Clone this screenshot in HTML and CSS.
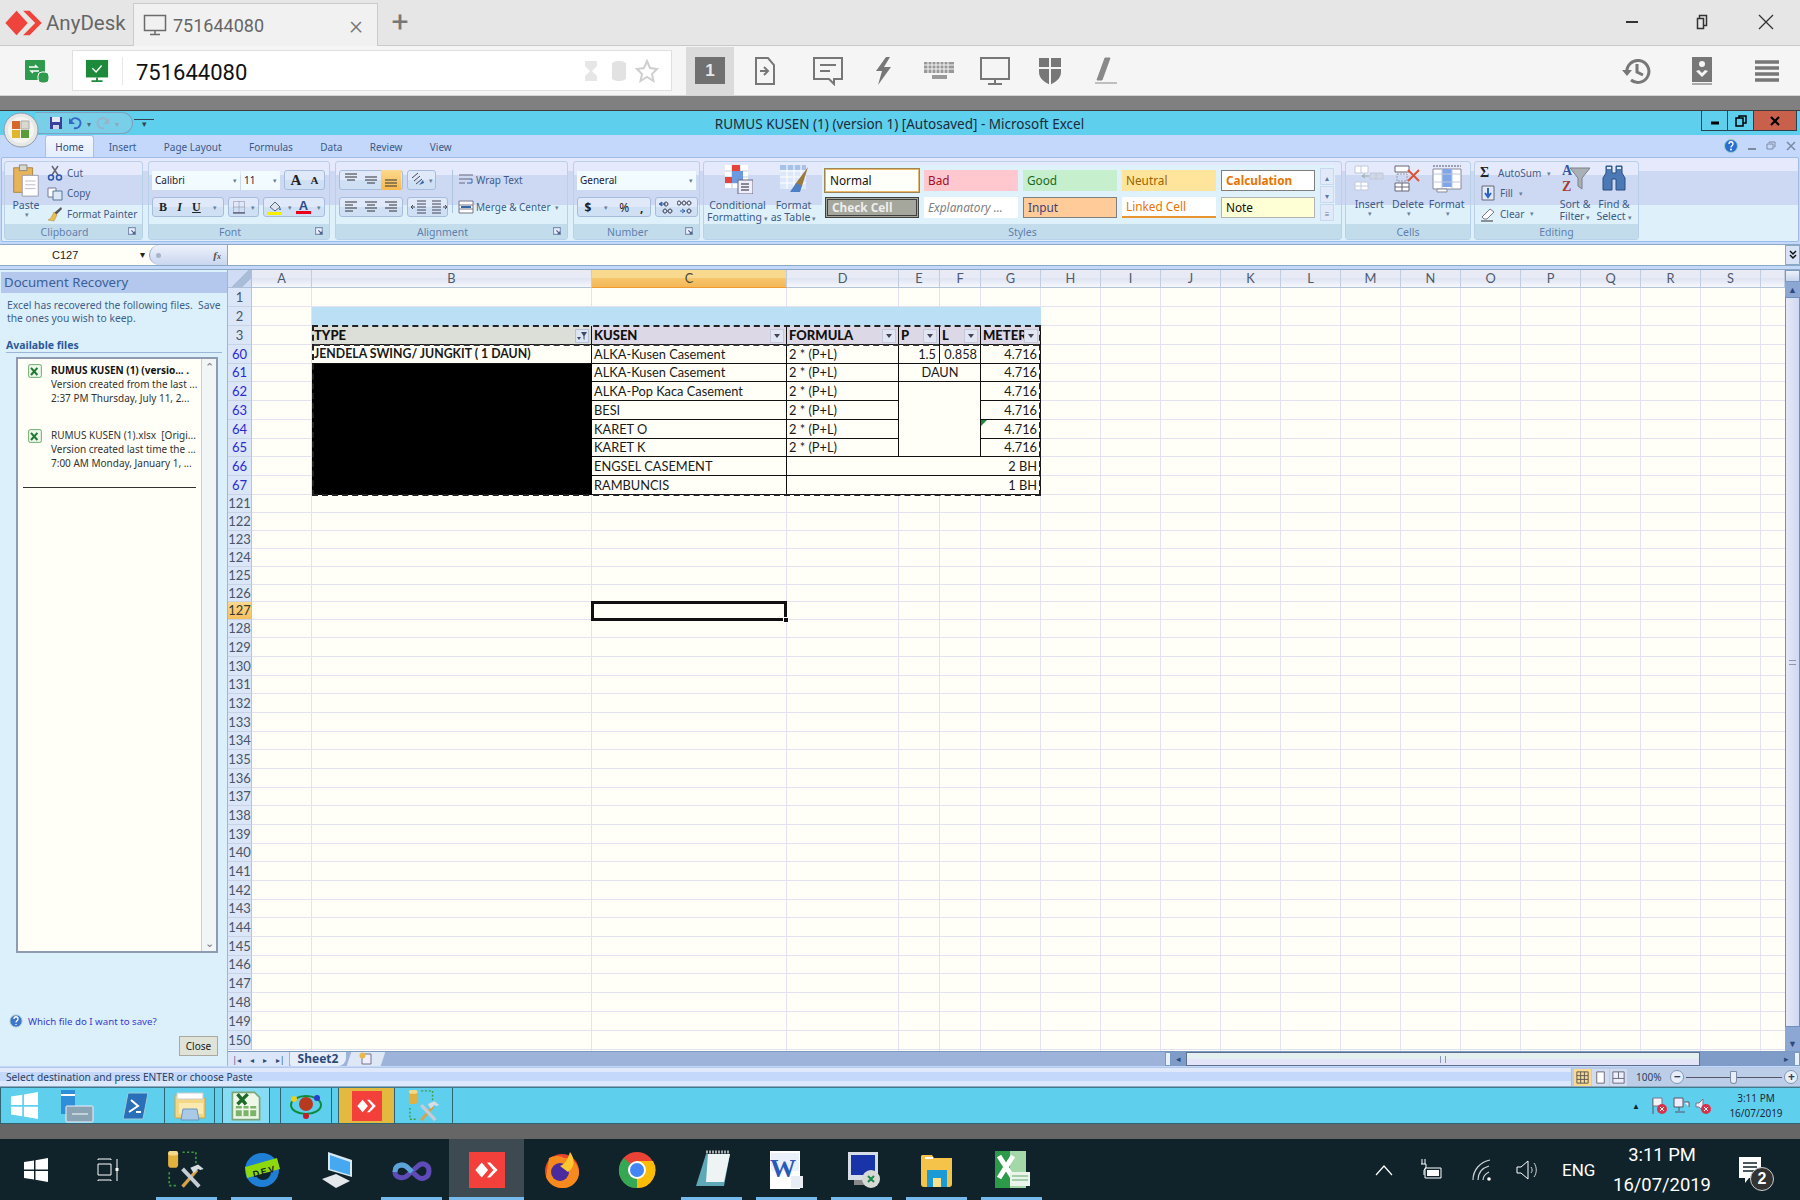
FILE: index.html
```html
<!DOCTYPE html>
<html lang="en">
<head>
<meta charset="utf-8">
<title>AnyDesk - 751644080</title>
<link rel="stylesheet" href="styles.css">
</head>
<body>
<svg class="defs" width="0" height="0">
  <symbol id="ad" viewBox="0 0 40 30"><path d="M0 15 12 2l12 13-12 13z" fill="#ef443b"/><path d="M19 2h7l13 13-13 13h-7l13-13z" fill="#ef443b"/></symbol>
  <symbol id="adw" viewBox="0 0 34 34"><rect width="34" height="34" fill="#f4403a"/><path d="M6 17l6-7 6 7-6 7z" fill="#fff"/><path d="M17 10h3l7 7-7 7h-3l6-7z" fill="#fff"/></symbol>
  <symbol id="win" viewBox="0 0 24 24"><path d="M0 4l10-1.500V11.500H0zM11.500 2.300 24 0v11.500H11.500zM0 13h10v8.500L0 20zM11.500 13H24v11l-12.500-2.200z" fill="#fff"/></symbol>
  <symbol id="tool" viewBox="0 0 36 36"><rect x="1" y="1" width="9" height="15" rx="3" fill="#e0b13c"/><rect x="1" y="1" width="9" height="4" rx="2" fill="#f3da8a"/><path d="M14 2h12v12M2 20v12h8" fill="none" stroke="#3c9a3c" stroke-width="1.500" stroke-dasharray="2 2"/><path d="M14 33 27 18" stroke="#d7a24a" stroke-width="3"/><path d="M14 17 29 33" stroke="#c5ccd3" stroke-width="3.500"/><path d="M21 16l7-3 5 4-3 1-2-1-4 4z" fill="#d8dde2"/></symbol>
  <symbol id="xl" viewBox="0 0 20 20"><rect x="2" y="2" width="16" height="16" rx="2" fill="#eef7ea" stroke="#4e9a52"/><path d="M5 6l8 9M13 6l-8 9" stroke="#1d7a31" stroke-width="2.500"/></symbol>
  <symbol id="launch" viewBox="0 0 8 8"><path d="M.5.500h6v6h-6z" fill="#eef" stroke="#7d94b4"/><path d="M3 3l3 3M6 4v2H4" stroke="#47648a" fill="none"/></symbol>
</svg>

<header class="ad-tabs">
  <div class="ad-brand"><svg class="ad-logo"><use href="#ad"/></svg><span>AnyDesk</span></div>
  <div class="ad-tab">
    <svg class="i24" viewBox="0 0 24 24"><path d="M1.500 2.500h21v15h-21zM12 18v3M7 21.500h10" fill="none" stroke="#6b6b6b" stroke-width="1.500"/></svg>
    <span class="ad-tabtext">751644080</span>
    <span class="ad-x">×</span>
  </div>
  <span class="ad-plus">+</span>
  <div class="ad-win">
    <svg class="i16" viewBox="0 0 16 16"><path d="M2 8h12" stroke="#333" stroke-width="2"/></svg>
    <svg class="i16" viewBox="0 0 16 16"><path d="M4.500 4.500v-3h7v10h-3M2.500 4.500h6v10h-6z" fill="none" stroke="#333" stroke-width="1.500"/></svg>
    <svg class="i16" viewBox="0 0 16 16"><path d="M1 1l14 14M15 1 1 15" stroke="#333" stroke-width="1.300"/></svg>
  </div>
</header>
<div class="ad-bar">
  <svg class="ad-sec" viewBox="0 0 26 26"><rect x="1" y="2" width="20" height="20" rx="1" fill="#2e9a4e"/><path d="M5 9h8l-2-2M15 13H7l2 2" stroke="#fff" fill="none" stroke-width="1.500"/><rect x="14" y="14" width="11" height="11" rx="4" fill="#2e9a4e" stroke="#fff"/></svg>
  <div class="ad-addr">
    <svg class="ad-mon" viewBox="0 0 26 26"><rect x="1" y="1" width="24" height="19" fill="#1c8a3b"/><path d="M8 10l4 4 6-7" fill="none" stroke="#fff" stroke-width="1.500"/><path d="M13 20v3M7 24h12" stroke="#1c8a3b" stroke-width="2"/></svg>
    <span class="ad-sep"></span>
    <span class="ad-num">751644080</span>
    <div class="ad-addr-ic">
      <svg class="i24" viewBox="0 0 24 24"><path d="M6 2h12v5l-5 5 5 5v5H6v-5l5-5-5-5z" fill="#e6e6e6"/></svg>
      <svg class="i24" viewBox="0 0 24 24"><path d="M5 5c0-4 14-4 14 0v14c0 4-14 4-14 0z" fill="#e2e2e2"/></svg>
      <svg class="i24" viewBox="0 0 24 24"><path d="M12 2l3 7 7 1-5 5 1.500 7-6.500-4-6.500 4L7 15 2 10l7-1z" fill="none" stroke="#cfcfcf" stroke-width="2"/></svg>
    </div>
  </div>
  <div class="ad-tools">
    <div class="ad-one"><span>1</span></div>
    <svg class="tool-ic" viewBox="0 0 30 30"><path d="M6 2h12l6 7v19H6zM10 15h7M14 11l4 4-4 4" fill="none" stroke="#777" stroke-width="2"/></svg>
    <svg class="tool-ic tool-chat" viewBox="0 0 30 30"><path d="M1 2h28v21H21v5l-5-5H1zM7 9h16M7 15h10" fill="none" stroke="#777" stroke-width="2"/></svg>
    <svg class="tool-ic" viewBox="0 0 30 30"><path d="M17 1 7 15h6l-4 14 13-18h-7l6-10z" fill="#777"/></svg>
    <svg class="tool-ic" viewBox="0 0 30 30"><path d="M0 6h30v11H0zM8 19h15v4H8z" fill="#999"/><path d="M0 9h30M0 13h30M4 6v11M8 6v11M12 6v11M16 6v11M20 6v11M24 6v11" stroke="#f5f5f5"/></svg>
    <svg class="tool-ic" viewBox="0 0 30 30"><path d="M1 2h28v21H1zM15 23v4M8 28h14" fill="none" stroke="#777" stroke-width="2"/></svg>
    <svg class="tool-ic" viewBox="0 0 30 30"><path d="M4 2h22v14c0 7-6 10-11 13C10 26 4 23 4 16z" fill="#777"/><path d="M15 2v27M4 12h22" stroke="#f5f5f5" stroke-width="2"/></svg>
    <svg class="tool-ic" viewBox="0 0 30 30"><path d="M14 2h5L11 24H6zM4 27h22" fill="#888" stroke="#888" stroke-width="1"/></svg>
  </div>
  <div class="ad-right">
    <svg class="tool-ic" viewBox="0 0 30 30"><path d="M5 17a11 11 0 1 1 4 7M15 8v8l6 3" fill="none" stroke="#777" stroke-width="3"/><path d="M0 14l5 6 5-6z" fill="#777"/></svg>
    <svg class="tool-ic" viewBox="0 0 30 30"><path d="M5 1h20v25H5z" fill="#777"/><path d="M5 27h20v2H5z" fill="#aaa"/><circle cx="15" cy="8" r="3" fill="#f5f5f5"/><path d="M9 15l6 6 6-6-3-1-3 3-3-3z" fill="#f5f5f5"/></svg>
    <svg class="tool-ic" viewBox="0 0 30 30"><path d="M3 6h24M3 12h24M3 18h24M3 24h24" stroke="#777" stroke-width="3.500"/></svg>
  </div>
</div>
<div class="gap-top"></div>

<main class="xl">
  <div class="xl-title">
    <div class="qat">
      <svg class="i14" viewBox="0 0 14 14"><path d="M1 1h12v12H1z" fill="#3a3f9c"/><path d="M3 1h8v5H3z" fill="#e6e8f4"/><path d="M4 9h6v4H4z" fill="#cfd3e8"/></svg>
      <svg class="i14" viewBox="0 0 14 14"><path d="M3 5a5 5 0 1 1 3 7" fill="none" stroke="#3467c8" stroke-width="2"/><path d="M1 2v6h6z" fill="#3467c8"/></svg>
      <span class="qat-ar">▾</span>
      <svg class="i14" viewBox="0 0 14 14"><path d="M11 5a5 5 0 1 0-3 7" fill="none" stroke="#96b4cc" stroke-width="2"/><path d="M13 2v6H7z" fill="#96b4cc"/></svg>
      <span class="qat-ar dim">▾</span>
    </div>
    <span class="qat-more">▾</span>
    <div class="xl-name">RUMUS KUSEN (1) (version 1) [Autosaved] - Microsoft Excel</div>
    <div class="xl-winbtns">
      <span class="wb"><svg class="i12" viewBox="0 0 12 12"><path d="M2 8h8" stroke="#000" stroke-width="3"/></svg></span>
      <span class="wb"><svg class="i12" viewBox="0 0 12 12"><path d="M4 3V1h7v7H8M1 3h7v8H1z" fill="none" stroke="#000" stroke-width="1.500"/></svg></span>
      <span class="wb wb-x"><svg class="i12" viewBox="0 0 12 12"><path d="M2 2l8 8M10 2l-8 8" stroke="#000" stroke-width="2.200"/></svg></span>
    </div>
  </div>
  <svg class="orb" viewBox="0 0 36 36"><circle cx="18" cy="18" r="17" fill="#e7e8e6" stroke="#8a9aa8"/><circle cx="18" cy="18" r="13" fill="#f4f4f0"/><path d="M9 9h8v8H9z" fill="#d8682a"/><path d="M18 9h8v8h-8z" fill="#d9d9d0" stroke="#aaa"/><path d="M9 18h8v8H9z" fill="#e0b62c"/><path d="M18 18h8v8h-8z" fill="#5a9c3a"/></svg>

  <nav class="rb-tabs">
    <span class="rb-tab on">Home</span><span class="rb-tab">Insert</span><span class="rb-tab">Page Layout</span><span class="rb-tab">Formulas</span><span class="rb-tab">Data</span><span class="rb-tab">Review</span><span class="rb-tab">View</span>
    <div class="rb-help">
      <svg class="i14" viewBox="0 0 14 14"><circle cx="7" cy="7" r="6.500" fill="#2a6fd0" stroke="#9cc"/><circle cx="7" cy="10.500" r="1" fill="#fff"/><path d="M5 5c0-3 4-3 4 0 0 2-2 1.500-2 3.500" fill="none" stroke="#fff" stroke-width="1.300"/></svg>
      <span class="h-min"></span>
      <svg class="i10" viewBox="0 0 10 10"><path d="M3 2V1h6v5H8M1 3h6v5H1z" fill="none" stroke="#7b8aa0"/></svg>
      <svg class="i10" viewBox="0 0 10 10"><path d="M1 1l8 8M9 1 1 9" stroke="#7b8aa0" stroke-width="1.500"/></svg>
    </div>
  </nav>

  <section class="ribbon">
    <div class="group g-clip">
      <div class="g-body">
        <div class="big paste">
          <svg class="i40" viewBox="0 0 28 36"><path d="M1 4h20v26H1z" fill="#e8b45a" stroke="#a8843c"/><path d="M7 1h8v6H7z" fill="#d8d8d0" stroke="#887"/><path d="M10 12h17v22H10z" fill="#fff" stroke="#99a"/><path d="M13 18h11M13 22h11M13 26h11" stroke="#bbc"/></svg>
          <span>Paste</span><span class="ar">▾</span>
        </div>
        <div class="stack">
          <div class="sm"><svg class="i16" viewBox="0 0 16 16"><path d="M5 1l6 9M11 1 5 10" stroke="#667" stroke-width="1.500"/><circle cx="4" cy="12.500" r="2.500" fill="none" stroke="#35a" stroke-width="1.500"/><circle cx="12" cy="12.500" r="2.500" fill="none" stroke="#35a" stroke-width="1.500"/></svg>Cut</div>
          <div class="sm"><svg class="i16" viewBox="0 0 16 16"><path d="M1 3h8v9H1z" fill="#fff" stroke="#779"/><path d="M6 6h9v9H6z" fill="#dbe6f6" stroke="#579"/></svg>Copy</div>
          <div class="sm"><svg class="i16" viewBox="0 0 16 16"><path d="M14 1l1 2-6 6-2-2z" fill="#555"/><path d="M7 6l3 3-3 6-6-1c3-1 4-4 6-8z" fill="#e8c04a" stroke="#a8843c" stroke-width=".5"/></svg>Format Painter</div>
        </div>
      </div>
      <div class="g-label lx">Clipboard<svg class="launch"><use href="#launch"/></svg></div>
    </div>

    <div class="group g-font">
      <div class="g-body col">
        <div class="line">
          <span class="combo w88">Calibri<i class="ar">▾</i></span><span class="combo w39">11<i class="ar">▾</i></span>
          <span class="box w41"><b class="ft-l">A</b><b class="ft-s">A</b></span>
        </div>
        <div class="line">
          <span class="box w72"><b class="bi serif">B</b><i class="bi serif">I</i><u class="bi serif">U</u><i class="ar">▾</i></span>
          <span class="box w31"><svg class="i14" viewBox="0 0 14 14"><path d="M1.500 1.500h11v11h-11zM7 1.500v11M1.500 7h11" fill="none" stroke="#889" stroke-dasharray="1 1"/><path d="M1 13h12" stroke="#334"/></svg><i class="ar">▾</i></span>
          <span class="box w62">
            <span class="colorbtn"><svg class="i14" viewBox="0 0 14 14"><path d="M2 7l5-5 5 5-5 4z" fill="#dfe4ee" stroke="#567"/><path d="M12 7l1 3-2 0z" fill="#36a"/></svg><i class="bar yellow"></i></span><i class="ar">▾</i>
            <span class="colorbtn"><b class="fa">A</b><i class="bar red"></i></span><i class="ar">▾</i>
          </span>
        </div>
      </div>
      <div class="g-label lx">Font<svg class="launch"><use href="#launch"/></svg></div>
    </div>

    <div class="group g-align">
      <div class="g-body col">
        <div class="line">
          <span class="box w64">
            <svg class="i20" viewBox="0 0 20 20"><path d="M4 4h12M4 7h12M6 10h8" stroke="#333"/></svg>
            <svg class="i20" viewBox="0 0 20 20"><path d="M4 7h12M4 10h12M6 13h8" stroke="#333"/></svg>
            <svg class="i20 act" viewBox="0 0 20 20"><path d="M4 10h12M4 13h12M4 16h12" stroke="#333"/></svg>
          </span>
          <span class="box w29"><svg class="i16" viewBox="0 0 16 16"><path d="M2 6l6-5M4 9l6-5M6 12l6-5" stroke="#445"/><path d="M9 13l5-2-1-3z" fill="#36a"/></svg><i class="ar">▾</i></span>
          <span class="vsep"></span>
          <span class="sm wide"><svg class="i16" viewBox="0 0 16 16"><path d="M1 3h14M1 7h10M1 11h6" stroke="#667"/><path d="M11 7h3v4h-5" fill="none" stroke="#36a"/></svg>Wrap Text</span>
        </div>
        <div class="line">
          <span class="box w64">
            <svg class="i20" viewBox="0 0 20 20"><path d="M4 5h12M4 8h8M4 11h12M4 14h8" stroke="#333"/></svg>
            <svg class="i20" viewBox="0 0 20 20"><path d="M4 5h12M6 8h8M4 11h12M6 14h8" stroke="#333"/></svg>
            <svg class="i20" viewBox="0 0 20 20"><path d="M4 5h12M8 8h8M4 11h12M8 14h8" stroke="#333"/></svg>
          </span>
          <span class="box w41">
            <svg class="i20" viewBox="0 0 20 20"><path d="M8 4h9M8 7h9M8 10h9M8 13h9M8 16h9M6 10H2M4 8l-2 2 2 2" fill="none" stroke="#445"/></svg>
            <svg class="i20" viewBox="0 0 20 20"><path d="M3 4h9M3 7h9M3 10h9M3 13h9M3 16h9M14 10h4M16 8l2 2-2 2" fill="none" stroke="#445"/></svg>
          </span>
          <span class="vsep hide"></span>
          <span class="sm wide"><svg class="i16" viewBox="0 0 16 16"><path d="M1 2h14v12H1zM1 6h14M1 10h14" fill="#fff" stroke="#778"/><path d="M3 7h10v2H3z" fill="#36a"/></svg>Merge &amp; Center<i class="ar">▾</i></span>
        </div>
      </div>
      <div class="g-label lx">Alignment<svg class="launch"><use href="#launch"/></svg></div>
    </div>

    <div class="group g-num">
      <div class="g-body col">
        <div class="line"><span class="combo w119">General<i class="ar">▾</i></span></div>
        <div class="line">
          <span class="box w74"><b class="bi">$</b><i class="ar">▾</i><span class="bi">%</span><b class="bi">,</b></span>
          <span class="box w43"><svg class="i20" viewBox="0 0 20 20"><path d="M2 7l3-2v4zM6 7h3" stroke="#36a" fill="#36a"/><path d="M10 14a2 2 0 1 0 0 .1M15 14a2 2 0 1 0 0 .1M11 7a2 2 0 1 0 0 .1" fill="none" stroke="#334"/></svg><svg class="i20" viewBox="0 0 20 20"><path d="M4 6a2 2 0 1 0 0 .1M9 6a2 2 0 1 0 0 .1M14 6a2 2 0 1 0 0 .1M14 14a2 2 0 1 0 0 .1" fill="none" stroke="#334"/><path d="M3 14h5M5 12l3 2-3 2" stroke="#36a" fill="none"/></svg></span>
        </div>
      </div>
      <div class="g-label lx">Number<svg class="launch"><use href="#launch"/></svg></div>
    </div>

    <div class="group g-styles">
      <div class="g-body">
        <div class="big cond">
          <svg class="i30" viewBox="0 0 30 30"><path d="M2 1h23v23H2z" fill="#fff"/><path d="M2 7h23M2 13h23M2 19h23M9 1v23M17 1v23" stroke="#c3cfe2"/><path d="M9 1h8v6H9zM2 13h8v6H2z" fill="#e6433a"/><path d="M9 7h11v12H9z" fill="#6b9ae0"/><path d="M15 16h15v14H15z" fill="#eef" stroke="#667"/><path d="M18 20h8M18 23h8M18 26h8" stroke="#222"/></svg>
          <span>Conditional</span><span>Formatting<i class="ar">▾</i></span>
        </div>
        <div class="big fmt-t">
          <svg class="i30" viewBox="0 0 30 30"><path d="M1 1h26v24H1z" fill="#dde9fa"/><path d="M1 1h26v5H1z" fill="#a7c2ea"/><path d="M1 7h26M1 13h26M1 19h26M8 1v24M15 1v24M22 1v24" stroke="#fff"/><path d="M29 3 17 19l-2 7 8-4z" fill="#9b7a3e"/><path d="M17 19l-6 9h10l2-6z" fill="#4d7fc4"/></svg>
          <span>Format</span><span>as Table<i class="ar">▾</i></span>
        </div>
        <div class="gallery">
          <div class="gal-grid">
            <span class="st st-normal">Normal</span><span class="st st-bad">Bad</span><span class="st st-good">Good</span><span class="st st-neutral">Neutral</span><span class="st st-calc">Calculation</span>
            <span class="st st-check">Check Cell</span><span class="st st-expl">Explanatory ...</span><span class="st st-input">Input</span><span class="st st-link">Linked Cell</span><span class="st st-note">Note</span>
          </div>
          <div class="gal-sc"><span>▴</span><span>▾</span><span class="on">≡</span></div>
        </div>
      </div>
      <div class="g-label">Styles</div>
    </div>

    <div class="group g-cells">
      <div class="g-body even">
        <div class="big cell-b">
          <svg class="i30" viewBox="0 0 30 30"><path d="M1 2h13v7H1zM1 18h13v8H1zM7 2v7M7 18v8M1 22h13" fill="#fff" stroke="#bfc8da"/><path d="M16 9h13v6H16zM22 9v6" fill="#cdd7e6" stroke="#bfc8da"/><path d="M15 12H8m3-2-3 2 3 2" fill="none" stroke="#9aa"/></svg>
          <span>Insert</span><i class="ar">▾</i>
        </div>
        <div class="big cell-b">
          <svg class="i30" viewBox="0 0 30 30"><path d="M2 2h14v6H2zM2 19h14v8H2zM9 19v8M2 23h14" fill="#fff" stroke="#667"/><path d="M4 10h10v7H4z" fill="none" stroke="#99a" stroke-dasharray="2 1"/><path d="M15 6l11 11M26 6 15 17" stroke="#e0533a" stroke-width="2"/></svg>
          <span>Delete</span><i class="ar">▾</i>
        </div>
        <div class="big cell-b">
          <svg class="i30" viewBox="0 0 30 30"><path d="M1 5h28v20H1z" fill="#fff" stroke="#889"/><path d="M10 5h10v18H10z" fill="#7fa6e8"/><path d="M1 10h28M1 18h28M10 5v20M20 5v20" stroke="#bfc8da"/><path d="M1 2h28" stroke="#556" stroke-dasharray="2 1"/><path d="M5 25h10v3H5z" fill="#fff" stroke="#889"/></svg>
          <span>Format</span><i class="ar">▾</i>
        </div>
      </div>
      <div class="g-label">Cells</div>
    </div>

    <div class="group g-edit">
      <div class="g-body">
        <div class="stack edit-stack">
          <div class="sm"><b class="sigma">Σ</b>AutoSum<i class="ar">▾</i></div>
          <div class="sm"><svg class="i16" viewBox="0 0 16 16"><path d="M2 1h12v14H2z" fill="#dfe9f8" stroke="#667"/><path d="M8 3v8M5 8l3 4 3-4" stroke="#2a62c8" fill="none" stroke-width="2"/></svg>Fill<i class="ar">▾</i></div>
          <div class="sm"><svg class="i16" viewBox="0 0 16 16"><path d="M2 11l8-8 4 3-7 7H4z" fill="#fff" stroke="#778"/><path d="M1 15h12" stroke="#333"/></svg>Clear<i class="ar">▾</i></div>
        </div>
        <div class="big sort">
          <svg class="i30" viewBox="0 0 30 30"><path d="M10 5h20l-8 10v11l-4-3v-8z" fill="#a9b0b6" stroke="#7a8188"/><text x="2" y="12" class="az a">A</text><text x="2" y="28" class="az z">Z</text></svg>
          <span>Sort &amp;</span><span>Filter<i class="ar">▾</i></span>
        </div>
        <div class="big find">
          <svg class="i30" viewBox="0 0 30 30"><path d="M7 3h6v7h4V3h6v7l3 5v12h-9V16h-4v11H4V15l3-5z" fill="#4a79b6" stroke="#2c4f80"/><path d="M8 5h4M18 5h4" stroke="#dfe9f8" stroke-width="2"/></svg>
          <span>Find &amp;</span><span>Select<i class="ar">▾</i></span>
        </div>
      </div>
      <div class="g-label">Editing</div>
    </div>
  </section>

  <div class="fbar">
    <div class="namebox">C127<i class="ar dark">▾</i></div>
    <div class="fbtn"><i class="fdot"></i><em>f<small>x</small></em></div>
    <div class="finput"></div>
    <div class="fexp"><svg class="i10" viewBox="0 0 10 10"><path d="M2 1l3 3 3-3M2 5l3 3 3-3" fill="none" stroke="#111" stroke-width="1.500"/></svg></div>
  </div>

  <div class="work">
    <aside class="rec">
      <h2>Document Recovery</h2>
      <p class="rec-intro">Excel has recovered the following files.&nbsp; Save<br>the ones you wish to keep.</p>
      <h3>Available files</h3>
      <div class="rec-list">
        <div class="rec-items">
          <div class="rec-item"><svg class="i16"><use href="#xl"/></svg><div><b>RUMUS KUSEN (1) (versio... .</b><br>Version created from the last ...<br>2:37 PM Thursday, July 11, 2...</div></div>
          <div class="rec-item"><svg class="i16"><use href="#xl"/></svg><div>RUMUS KUSEN (1).xlsx&nbsp; [Origi...<br>Version created last time the ...<br>7:00 AM Monday, January 1, ...</div></div>
          <hr class="rec-hr">
        </div>
        <div class="rec-sc"><span>⌃</span><span>⌄</span></div>
      </div>
      <div class="rec-foot">
        <div class="rec-link"><svg class="i14" viewBox="0 0 14 14"><circle cx="7" cy="7" r="6" fill="#3c76c8" stroke="#9bc"/><path d="M5 5c0-3 4-3 4 0 0 2-2 1.500-2 3.500M7 10v1" fill="none" stroke="#fff" stroke-width="1.300"/></svg><span>Which file do I want to save?</span></div>
        <div class="rec-close"><span>Close</span></div>
      </div>
    </aside>

    <div class="sheetwrap">
      <div class="sheetmain">
        <div class="sheet">
          <div class="r hdr">
            <div class="corner"></div><div class="ch">A</div><div class="ch">B</div><div class="ch sel">C</div><div class="ch">D</div><div class="ch">E</div><div class="ch">F</div><div class="ch">G</div><div class="ch">H</div><div class="ch">I</div><div class="ch">J</div><div class="ch">K</div><div class="ch">L</div><div class="ch">M</div><div class="ch">N</div><div class="ch">O</div><div class="ch">P</div><div class="ch">Q</div><div class="ch">R</div><div class="ch">S</div><div class="ch"></div>
          </div>
          <div class="rows">
            <div class="r"><div class="rh">1</div></div>
            <div class="r"><div class="rh">2</div><div class="band"></div></div>
            <div class="r"><div class="rh">3</div>
              <div class="cell hd hd-t c-b"><span>TYPE</span><svg class="filt" viewBox="0 0 14 14"><rect x=".5" y=".5" width="13" height="13" fill="#dde4f2" stroke="#b5c2d8"/><path d="M6 3h6L9.500 7v4L8.500 10V7zM2 8h4l-2 3z" fill="#3c4a68"/></svg></div>
              <div class="cell hd c-c"><span>KUSEN</span><i class="dd"></i></div>
              <div class="cell hd c-d"><span>FORMULA</span><i class="dd"></i></div>
              <div class="cell hd c-e"><span>P</span><i class="dd"></i></div>
              <div class="cell hd c-f"><span>L</span><i class="dd"></i></div>
              <div class="cell hd hd-m c-g"><span>METER</span><i class="dd"></i></div>
            </div>
            <div class="r"><div class="rh f">60</div>
              <div class="cell bold c-b"><span>JENDELA SWING/ JUNGKIT ( 1 DAUN)</span></div>
              <div class="cell c-c"><span>ALKA-Kusen Casement</span></div><div class="cell c-d"><span>2 * (P+L)</span></div><div class="cell num c-e"><span>1.5</span></div><div class="cell num c-f"><span>0.858</span></div><div class="cell num c-g"><span>4.716</span></div>
            </div>
            <div class="r"><div class="rh f">61</div><div class="cell blk c-b"></div>
              <div class="cell c-c"><span>ALKA-Kusen Casement</span></div><div class="cell c-d"><span>2 * (P+L)</span></div><div class="cell ctr c-ef"><span>DAUN</span></div><div class="cell num c-g"><span>4.716</span></div>
            </div>
            <div class="r"><div class="rh f">62</div><div class="cell blk c-b"></div>
              <div class="cell c-c"><span>ALKA-Pop Kaca Casement</span></div><div class="cell c-d"><span>2 * (P+L)</span></div><div class="cell open c-ef"></div><div class="cell num c-g"><span>4.716</span></div>
            </div>
            <div class="r"><div class="rh f">63</div><div class="cell blk c-b"></div>
              <div class="cell c-c"><span>BESI</span></div><div class="cell c-d"><span>2 * (P+L)</span></div><div class="cell open c-ef"></div><div class="cell num c-g"><span>4.716</span></div>
            </div>
            <div class="r"><div class="rh f">64</div><div class="cell blk c-b"></div>
              <div class="cell c-c"><span>KARET O</span></div><div class="cell c-d"><span>2 * (P+L)</span></div><div class="cell open c-ef"></div><div class="cell num tri c-g"><span>4.716</span></div>
            </div>
            <div class="r"><div class="rh f">65</div><div class="cell blk c-b"></div>
              <div class="cell c-c"><span>KARET K</span></div><div class="cell c-d"><span>2 * (P+L)</span></div><div class="cell c-ef"></div><div class="cell num c-g"><span>4.716</span></div>
            </div>
            <div class="r"><div class="rh f">66</div><div class="cell blk c-b"></div>
              <div class="cell c-c"><span>ENGSEL CASEMENT</span></div><div class="cell num c-dg"><span>2 BH</span></div>
            </div>
            <div class="r"><div class="rh f">67</div><div class="cell blk c-b"></div>
              <div class="cell c-c"><span>RAMBUNCIS</span></div><div class="cell num c-dg"><span>1 BH</span></div>
            </div>
            <div class="r"><div class="rh">121</div></div><div class="r"><div class="rh">122</div></div><div class="r"><div class="rh">123</div></div><div class="r"><div class="rh">124</div></div><div class="r"><div class="rh">125</div></div><div class="r"><div class="rh">126</div></div>
            <div class="r"><div class="rh sel">127</div><div class="active c-c"><i></i></div></div>
            <div class="r"><div class="rh">128</div></div><div class="r"><div class="rh">129</div></div><div class="r"><div class="rh">130</div></div><div class="r"><div class="rh">131</div></div><div class="r"><div class="rh">132</div></div><div class="r"><div class="rh">133</div></div><div class="r"><div class="rh">134</div></div><div class="r"><div class="rh">135</div></div><div class="r"><div class="rh">136</div></div><div class="r"><div class="rh">137</div></div><div class="r"><div class="rh">138</div></div><div class="r"><div class="rh">139</div></div><div class="r"><div class="rh">140</div></div><div class="r"><div class="rh">141</div></div><div class="r"><div class="rh">142</div></div><div class="r"><div class="rh">143</div></div><div class="r"><div class="rh">144</div></div><div class="r"><div class="rh">145</div></div><div class="r"><div class="rh">146</div></div><div class="r"><div class="rh">147</div></div><div class="r"><div class="rh">148</div></div><div class="r"><div class="rh">149</div></div><div class="r"><div class="rh">150</div></div>
            <div class="ants"><div class="ants-h"></div></div>
          </div>
        </div>
        <div class="vscroll">
          <span class="vs-split"></span><span class="vs-up">▲</span><span class="vs-thumb"><i></i></span><span class="vs-down">▼</span>
        </div>
      </div>
      <div class="sheetfoot">
        <div class="tabnav"><span>|◂</span><span>◂</span><span>▸</span><span>▸|</span></div>
        <div class="sheettab">Sheet2</div>
        <div class="newtab"><svg class="i14" viewBox="0 0 14 14"><path d="M3 2h9v10H3z" fill="#eef" stroke="#778"/><circle cx="3.500" cy="3.500" r="3" fill="#e8b94a"/></svg></div>
        <div class="hsc">
          <span class="hs-split"></span><span class="hs-ar">◂</span>
          <span class="hs-thumb"><i></i></span>
          <span class="hs-ar r-ar">▸</span><span class="hs-split"></span>
        </div>
      </div>
    </div>
  </div>

  <div class="status">
    <span class="st-text">Select destination and press ENTER or choose Paste</span>
    <div class="st-right">
      <svg class="vw on" viewBox="0 0 16 16"><path d="M2 2h12v12H2zM2 6h12M2 10h12M6 2v12M10 2v12" fill="none" stroke="#555"/></svg>
      <svg class="vw" viewBox="0 0 16 16"><path d="M4 2h8v12H4z" fill="#fff" stroke="#667"/></svg>
      <svg class="vw" viewBox="0 0 16 16"><path d="M2 2h12v12H2zM8 2v7M2 9h12" fill="#eef" stroke="#667"/></svg>
      <span class="zoomval">100%</span>
      <span class="zbtn">−</span>
      <span class="ztrack"><i></i></span>
      <span class="zbtn">+</span>
    </div>
  </div>

  <div class="rtask">
    <div class="rt-quick">
      <svg class="rt-win"><use href="#win"/></svg>
      <svg class="i34" viewBox="0 0 34 34"><path d="M1 1h14v24H1z" fill="#2e8fd8"/><path d="M1 6h14" stroke="#fff" stroke-width="2"/><rect x="6" y="17" width="27" height="16" rx="1" fill="#8aa4b4" stroke="#eef"/><path d="M12 25h16" stroke="#fff"/></svg>
      <svg class="i30" viewBox="0 0 30 30"><path d="M8 2h20l-5 26H3z" fill="#2a70b8" stroke="#9cd"/><path d="M11 9l7 6-9 6" fill="none" stroke="#fff" stroke-width="2"/><path d="M16 21h5" stroke="#fff" stroke-width="2"/></svg>
    </div>
    <div class="rt-item rt-folder"><svg class="i34" viewBox="0 0 34 34"><path d="M2 6h12l3 3h15v20H2z" fill="#f3d784" stroke="#c7a54a"/><path d="M4 4h26v6H4z" fill="#fff" stroke="#ccc"/><path d="M6 14h24v11H6z" fill="#fbeab0"/><path d="M10 20h14l2 11H8z" fill="#a9c9e6" stroke="#6a96bd"/></svg></div>
    <div class="rt-item rt-light"><svg class="i40" viewBox="0 0 20 20"><path d="M2 2h13l3 3v13H2z" fill="#eef7e8" stroke="#7aa67a"/><path d="M4 10h12v6H4z" fill="#7cb36a"/><path d="M4 12h12M8 10v6M12 10v6" stroke="#eef7e8"/><path d="M5 3l5 6M11 3 5 9" stroke="#1d6b2b" stroke-width="2"/></svg></div>
    <div class="rt-item rt-orb"><svg class="i34" viewBox="0 0 34 34"><ellipse cx="17" cy="16" rx="15" ry="9" fill="none" stroke="#0d8a3a" stroke-width="2"/><circle cx="17" cy="15" r="7" fill="#b83a1e"/><circle cx="5" cy="10" r="3" fill="#e8d020"/><circle cx="28" cy="9" r="3" fill="#2a3ccc"/><circle cx="17" cy="27" r="3" fill="#c81a2a"/></svg></div>
    <div class="rt-item rt-any"><svg class="i32"><use href="#adw"/></svg></div>
    <div class="rt-item rt-tool"><svg class="i34"><use href="#tool"/></svg></div>
    <div class="rt-tray">
      <span class="rt-up">▲</span>
      <svg class="i18" viewBox="0 0 18 18"><path d="M3 1v16" stroke="#556"/><path d="M3 1h9v8H3z" fill="#f4f4f4" stroke="#778"/><circle cx="12" cy="12" r="5" fill="#d8324a"/><path d="M10 10l4 4M14 10l-4 4" stroke="#fff"/></svg>
      <svg class="i18" viewBox="0 0 18 18"><path d="M2 1h9v9H2zM7 10v4M3 15h10M12 5h5v5" fill="#eef" stroke="#556"/></svg>
      <svg class="i18" viewBox="0 0 18 18"><path d="M2 6h3l4-4v12L5 10H2z" fill="#eef" stroke="#778"/><circle cx="12" cy="12" r="5" fill="#d8324a"/><path d="M10 10l4 4M14 10l-4 4" stroke="#fff"/></svg>
      <div class="rt-clock"><span>3:11 PM</span><span>16/07/2019</span></div>
    </div>
  </div>
</main>
<div class="gap-bot"></div>

<footer class="wtask">
  <div class="wt-start"><svg class="wt-win"><use href="#win"/></svg></div>
  <div class="wt-tv"><svg class="i24" viewBox="0 0 24 24"><path d="M2 1h13M2 6h13v11H2zM2 22h13M2 22v1M15 22v1M2 1v1M15 1v1M21 1v22" fill="none" stroke="#fff"/><path d="M19.500 10h3v3h-3z" fill="#fff"/></svg></div>
  <div class="wt"><svg class="i40"><use href="#tool"/></svg></div>
  <div class="wt"><svg class="i40" viewBox="0 0 40 40"><circle cx="20" cy="20" r="17" fill="#1e7fd4"/><circle cx="21" cy="22" r="8" fill="#10232b"/><path d="M3 17l32-9 3 11-33 9z" fill="#8ed80e"/><text x="10" y="25" class="dev" transform="rotate(-15 20 20)">DEV</text></svg></div>
  <div class="wt"><svg class="i40" viewBox="0 0 40 40"><path d="M11 2l24 8v17l-24-7z" fill="#d8e8f2"/><path d="M13 5l20 7v13l-20-6z" fill="#45a8f0"/><path d="M5 29l14-5 14 7-14 7z" fill="#e4e8ea"/></svg></div>
  <div class="wt"><svg class="i40" viewBox="0 0 40 40"><path d="M3 22c0-8 9-9 14-3l9 8c4 3 11 1 11-6s-7-9-11-5l-9 8c-5 6-14 4-14-2z" fill="none" stroke="#5e4bb8" stroke-width="5"/><path d="M3 22c0-8 9-9 14-3l3 3" fill="none" stroke="#5ba4d8" stroke-width="5"/></svg></div>
  <div class="wt wt-active"><svg class="i36"><use href="#adw"/></svg></div>
  <div class="wt"><svg class="i40" viewBox="0 0 40 40"><circle cx="20" cy="21" r="17" fill="#e8452c"/><path d="M7 8c4-2 10-3 15 0 8-1 14 6 15 13 1 10-8 18-17 17-7 0-13-4-16-11z" fill="#f68a1e"/><circle cx="18" cy="22" r="9" fill="#4a2a9c"/><path d="M28 2c6 8 4 16-2 20l-8-6c6-2 8-8 10-14z" fill="#fdc82f"/></svg></div>
  <div class="wt"><svg class="i40" viewBox="0 0 40 40"><circle cx="20" cy="20" r="18" fill="#ea4335"/><path d="M20 20 4 29a18 18 0 0 0 16 9z" fill="#34a853"/><path d="M4 29A18 18 0 0 1 7 8l13 12z" fill="#34a853"/><path d="M20 38a18 18 0 0 0 16-27H20z" fill="#fbbc05"/><circle cx="20" cy="20" r="9" fill="#fff"/><circle cx="20" cy="20" r="7" fill="#4285f4"/></svg></div>
  <div class="wt"><svg class="i40" viewBox="0 0 40 40"><path d="M14 4h24l-6 32H4z" fill="#5fa8b8"/><path d="M16 4h22l-6 28H14z" fill="#eef4f4"/><path d="M14 2h24" stroke="#aaa" stroke-width="3" stroke-dasharray="2 1"/></svg></div>
  <div class="wt"><svg class="i40" viewBox="0 0 40 40"><path d="M3 1h30v38H3z" fill="#fff"/><path d="M4 3h28v18H4z" fill="#eaf1fb"/><text x="3" y="27" class="w-l">W</text><path d="M24 26h12v12H24z" fill="#e8edf5"/></svg></div>
  <div class="wt"><svg class="i40" viewBox="0 0 40 40"><path d="M6 2h30v28H6z" fill="#d8dee6"/><path d="M9 5h24v20H9z" fill="#1834a8"/><path d="M12 30h18v5H12z" fill="#888"/><circle cx="29" cy="29" r="9" fill="#d6d9d4"/><path d="M26 26l3 3-3 3M32 26l-3 3 3 3" stroke="#1e8a4a" fill="none" stroke-width="2"/></svg></div>
  <div class="wt"><svg class="i40" viewBox="0 0 40 40"><path d="M5 5h10l2 3h18v26c0 2-1 3-3 3H7c-2 0-3-1-3-3V6z" fill="#f6c34a"/><path d="M10 20h20v17h-6v-9h-8v9h-6z" fill="#1c9ad6"/><path d="M16 28h8v9h-8z" fill="#fbe08a"/><path d="M8 8h8" stroke="#fff" stroke-width="2"/></svg></div>
  <div class="wt"><svg class="i40" viewBox="0 0 40 40"><path d="M3 1h31v37H3z" fill="#2c9a48"/><path d="M18 1h16v37H18z" fill="#a4d8a8"/><path d="M7 6l14 22M21 6 7 28" stroke="#fff" stroke-width="5"/><path d="M18 22h20v14H18z" fill="#eaf4ea"/><path d="M20 26h16M20 30h16" stroke="#5aa86a"/></svg></div>
  <div class="wt-tray">
    <svg class="i20" viewBox="0 0 20 20"><path d="M2 15l8-9 8 9" fill="none" stroke="#fff" stroke-width="1.200"/></svg>
    <svg class="i24 tr-plug" viewBox="0 0 24 24"><path d="M3 1v5M6 1v5M2 6h5v4l-2 2v5" fill="none" stroke="#fff"/><path d="M6 10h16v10H6z" fill="none" stroke="#fff"/><path d="M8 12h12v6H8z" fill="#fff"/></svg>
    <svg class="i24 tr-wifi" viewBox="0 0 24 24"><path d="M3 22C3 12 10 4 20 2M8 22c0-7 4-12 11-14M13 22c0-3 2-6 6-8" fill="none" stroke="#cfd5d8" stroke-width="1.200"/><circle cx="19" cy="21" r="1.800" fill="#fff"/></svg>
    <svg class="i24" viewBox="0 0 24 24"><path d="M2 9h4l7-6v18l-7-6H2z" fill="none" stroke="#fff"/><path d="M16 9c1.500 2 1.500 4 0 6M19 5c3 4 3 10 0 14" fill="none" stroke="#cfd5d8"/></svg>
    <span class="wt-eng">ENG</span>
    <div class="wt-clock"><span>3:11 PM</span><span>16/07/2019</span></div>
    <div class="wt-notif"><svg class="i28" viewBox="0 0 28 28"><path d="M2 1h22v21H12l-4 5v-5H2z" fill="#fff"/><path d="M6 7h14M6 11h14M6 15h14" stroke="#10232b" stroke-width="1.500"/></svg><span class="notif-n">2</span></div>
  </div>
</footer>
</body>
</html>
```

FILE: styles.css
```css
* { box-sizing: border-box; }
html, body { margin: 0; padding: 0; height: 1200px; overflow: hidden; }
body { width: 1800px; display: flex; flex-direction: column; font-family: "Noto Sans", sans-serif; background: #808080; }
.defs { position: absolute; height: 0; }
svg { flex: none; display: block; }
i { font-style: normal; }
.i10 { width: 10px; height: 10px; } .i12 { width: 12px; height: 12px; } .i14 { width: 14px; height: 14px; } .i16 { width: 16px; height: 16px; }
.i18 { width: 18px; height: 18px; } .i20 { width: 20px; height: 20px; } .i24 { width: 24px; height: 24px; } .i28 { width: 28px; height: 28px; }
.i30 { width: 30px; height: 30px; } .i32 { width: 34px; height: 34px; } .i34 { width: 34px; height: 34px; } .i36 { width: 36px; height: 36px; } .i40 { width: 40px; height: 40px; }

/* AnyDesk chrome */
.ad-tabs { height: 46px; flex: none; background: #e6e6e6; border-bottom: 1px solid #c9c9c9; display: flex; align-items: flex-end; }
.ad-brand { width: 133px; height: 45px; display: flex; align-items: center; padding-left: 5px; gap: 3px; font-family: Roboto, sans-serif; font-size: 20.500px; color: #666; }
.ad-logo { width: 38px; height: 28px; }
.ad-tab { width: 245px; height: 43px; background: #f1f1f1; border: 1px solid #cbcbcb; border-bottom: 0; margin-bottom: -1px; display: flex; align-items: center; padding-left: 9px; gap: 6px; font-family: Roboto, sans-serif; font-size: 18px; color: #666; }
.ad-tabtext { flex: 1; }
.ad-x { font-size: 26px; font-weight: 300; color: #777; width: 42px; text-align: center; }
.ad-plus { width: 44px; height: 45px; text-align: center; line-height: 44px; font-family: Roboto, sans-serif; font-size: 30px; color: #777; }
.ad-win { margin-left: auto; width: 196px; height: 45px; display: flex; align-items: center; justify-content: space-between; padding: 0 26px 2px 20px; }
.ad-win svg:nth-child(2) { margin-left: 8px; }
.ad-bar { height: 50px; flex: none; background: #f5f5f5; border-bottom: 1px solid #d4d4d4; display: flex; align-items: center; padding-left: 24px; }
.ad-sec { width: 26px; height: 26px; }
.ad-addr { width: 600px; height: 41px; margin-left: 22px; background: #fff; border: 1px solid #e0e0e0; display: flex; align-items: center; padding-left: 12px; }
.ad-mon { width: 24px; height: 24px; }
.ad-sep { width: 1px; height: 28px; background: #e8e8e8; margin: 0 13px 0 13px; }
.ad-num { flex: 1; font-family: Roboto, sans-serif; font-size: 22px; color: #111; padding-top: 3px; }
.ad-addr-ic { display: flex; gap: 4px; padding-right: 12px; }
.ad-tools { display: flex; align-items: center; margin-left: 14px; gap: 25.500px; }
.ad-one { width: 48px; height: 48px; background: #dbdbdb; display: flex; align-items: center; justify-content: center; margin-right: -9.500px; }
.ad-one span { width: 30px; height: 27px; background: #707070; color: #e8e8e8; font: bold 17px/27px "Liberation Sans", sans-serif; text-align: center; }
.tool-ic { width: 30px; height: 30px; }
.tool-chat { margin-left: 7.500px; }
.ad-right { display: flex; align-items: center; margin-left: auto; gap: 35px; padding-right: 18px; }
.gap-top { height: 15px; flex: none; background: #808080; border-bottom: 1px solid #3d3d3d; }

/* Excel window */
.xl { height: 1013px; flex: none; display: flex; flex-direction: column; position: relative; background: #c4d8fb; }
.xl-title { height: 24px; flex: none; background: #5fcfee; display: flex; align-items: center; }
.qat { margin-left: 35px; width: 98px; height: 22px; border: 1px solid #7da2c2; border-left: 0; border-radius: 0 12px 12px 0; background: #79cfe8; display: flex; align-items: center; padding-left: 14px; gap: 5px; }
.qat-ar { font-size: 8px; color: #567; } .qat-ar.dim { color: #8ab; }
.qat-more { width: 20px; text-align: center; font-size: 9px; color: #345; border-top: 1px solid #345; margin-left: 1px; line-height: 8px; }
.xl-name { flex: 1; height: 24px; text-align: center; font: 13.500px/27px "Noto Sans", sans-serif; color: #1c2a3a; padding-right: 56px; }
.xl-winbtns { width: 96px; height: 20px; align-self: flex-start; display: flex; margin-right: 3px; border: 1px solid #26424f; border-top: 0; }
.wb { width: 26px; display: flex; align-items: center; justify-content: center; border-right: 1px solid #26424f; }
.wb-x { flex: 1; background: #c9604c; border-right: 0; }
.orb { position: absolute; left: 3px; top: 1px; width: 36px; height: 36px; }
.rb-tabs { height: 22px; flex: none; display: flex; align-items: flex-end; padding-left: 45px; font-size: 10px; color: #3c5a88; }
.rb-tab { height: 22px; padding: 0 13.700px; line-height: 25px; }
.rb-tab.on { width: 49px; padding: 0; text-align: center; margin-right: 1px; line-height: 23px; background: linear-gradient(#f4f7fe, #e5eefc); border: 1px solid #a5c0e8; border-bottom: 0; border-radius: 3px 3px 0 0; color: #2c4a78; }
.rb-help { margin-left: auto; display: flex; align-items: center; gap: 10px; height: 22px; padding-right: 4px; }
.h-min { width: 8px; height: 2px; background: #7b8aa0; margin-top: 6px; }
.ribbon { height: 85px; flex: none; margin: 0 1px; padding: 3px 0 0 2px; display: flex; align-items: flex-start; gap: 3px; border: 1px solid #9ebce8; border-radius: 2px; background: linear-gradient(#e6e8fc 0 13px, #cdd9f3 13px 47px, #def0fa 47px); font-size: 10px; color: #3c5a88; }
.group { height: 79px; display: flex; flex-direction: column; border: 1px solid #b8d0e8; border-radius: 3px; background: linear-gradient(#e5e9fc 0 13px, #cdd9f3 13px 43px, #def0fa 43px); flex: none; }
.g-body { flex: 1; display: flex; min-height: 0; }
.g-body.col { flex-direction: column; padding: 8px 0 0 3px; gap: 7px; }
.g-body.even { justify-content: space-around; padding: 2px 4px 0; }
.g-label { height: 15px; flex: none; background: #c3dcec; text-align: center; line-height: 16px; font-size: 10.500px; color: #5f7fae; position: relative; }
.g-label.lx { padding-right: 18px; }
.launch { position: absolute; right: 5px; top: 3px; width: 9px; height: 9px; }
.g-clip { width: 139px; margin-right: 2px; } .g-font { width: 182px; margin-right: 2px; } .g-align { width: 233px; margin-right: 2px; } .g-num { width: 127px; }
.g-styles { width: 639px; } .g-cells { width: 126px; } .g-edit { width: 165px; }
.big { display: flex; flex-direction: column; align-items: center; line-height: 12px; font-size: 10.500px; text-align: center; white-space: nowrap; }
.paste { width: 42px; padding-top: 2px; gap: 0; }
.paste .i40 { width: 30px; height: 34px; margin-bottom: 1px; }
.stack { display: flex; flex-direction: column; padding-top: 1px; }
.sm { height: 20.500px; display: flex; align-items: center; gap: 4px; white-space: nowrap; color: #3f5c88; font-size: 10px; }
.ar { font-size: 7px; color: #6d7f99; line-height: 1; margin-left: 2px; }
.ar.dark { color: #222; font-size: 10px; }
.line { display: flex; align-items: center; height: 20px; gap: 4px; }
.combo { height: 19px; background: #f2fbff; display: flex; align-items: center; justify-content: space-between; padding: 0 3px 0 3px; color: #223; font-size: 10px; margin-right: -3px; }
.combo + .box { margin-left: 3px; }
.w88 { width: 88px; } .w39 { width: 39px; } .w119 { width: 119px; }
.box { height: 20px; display: flex; align-items: center; justify-content: space-around; border: 1px solid #a5bcdc; border-radius: 3px; background: linear-gradient(#e0e9fa 0 50%, #cfe0f5 50%); padding: 0 1px; color: #222; }
.w41 { width: 41px; } .w72 { width: 72px; } .w31 { width: 31px; } .w62 { width: 62px; } .w64 { width: 64px; } .w29 { width: 29px; } .w74 { width: 74px; } .w43 { width: 43px; }
.bi { font-size: 12px; font-style: normal; } .serif { font-family: "Liberation Serif", serif; font-weight: bold; } i.serif { font-style: italic; }
.ft-l { font: bold 15px "Liberation Serif", serif; } .ft-s { font: bold 11px "Liberation Serif", serif; }
.colorbtn { display: flex; flex-direction: column; align-items: center; }
.fa { font: bold 13px/11px "Liberation Sans", sans-serif; color: #2c4a90; }
.bar { width: 15px; height: 3px; } .yellow { background: #f4f000; } .red { background: #e8001c; }
.i14 + .bar { margin-top: -2px; }
.act { background: linear-gradient(#fbd98e, #f7b94e); }
.vsep { width: 1px; height: 43px; background: #aec3dc; margin: 0 1px 0 12px; align-self: flex-start; }
.vsep.hide { background: transparent; height: 1px; margin: 0 0 0 1px; }
.sm.wide { gap: 2px; }
.cond { width: 63px; margin-left: 2px; padding-top: 2px; } .fmt-t { width: 49px; padding-top: 2px; }
.cond .i30, .fmt-t .i30, .sort .i30, .find .i30 { margin-bottom: 5px; }
.gallery { margin-left: 4px; width: 513px; height: 57px; margin-top: 3px; background: #dff1fb; display: flex; }
.gal-grid { width: 497px; display: grid; grid-template-columns: repeat(5, 94px); grid-template-rows: 21px 21px; gap: 6px 5px; padding: 5px 0 0 3px; align-content: start; }
.st { display: flex; align-items: center; padding: 0 0 2px 4px; font-size: 11.800px; white-space: nowrap; overflow: hidden; }
.st-normal { background: #fffffa; border: 2px solid #e9b765; outline: 1px solid #9d8556; outline-offset: -1px; color: #111; height: 25px; margin: -2px -1px 0 -1px; }
.st-bad { background: #ffc7ce; color: #a00f24; } .st-good { background: #c6efce; color: #1a6a1a; } .st-neutral { background: #ffe49c; color: #9c6500; }
.st-calc { background: #fff; border: 1px solid #7f7f7f; color: #e97300; font-weight: bold; }
.st-check { background: #a5a69c; border: 3px double #3f3f3f; color: #eee; font-weight: bold; }
.st-expl { background: #fff; color: #7f7f7f; font-style: italic; }
.st-input { background: #ffcc99; border: 1px solid #7f7f7f; color: #3f3f76; }
.st-link { background: #fff; color: #e97300; border-bottom: 2px solid #e9942f; }
.st-note { background: #ffffd5; border: 1px solid #b2b2b2; color: #111; }
.gal-sc { width: 14px; margin: 3px 0 0 1px; display: flex; flex-direction: column; gap: 1px; font-size: 8px; color: #5a7aa5; text-align: center; }
.gal-sc span { height: 17px; line-height: 17px; background: #e2eafa; border: 1px solid #c8d8ee; }
.cell-b { width: 38px; } .cell-b .i30 { margin-bottom: 4px; }
.edit-stack { width: 78px; padding: 1px 0 0 5px; }
.sigma { font: bold 14px "Liberation Serif", serif; color: #222; width: 14px; }
.sort { width: 44px; padding-top: 1px; } .find { width: 34px; padding-top: 1px; }
.az { font: bold 14px "Liberation Serif", serif; } .a { fill: #3058a8; } .z { fill: #a83a30; }

/* formula bar */
.fbar { height: 22px; flex: none; margin-top: 2px; display: flex; background: #fffff7; border-top: 1px solid #8ca9c4; border-bottom: 1px solid #8ca9c4; font: 11px "Liberation Sans", sans-serif; color: #222; }
.namebox { width: 149px; display: flex; align-items: center; justify-content: space-between; padding: 0 4px 0 52px; }
.fbtn { width: 79px; display: flex; align-items: center; justify-content: space-between; padding: 0 6px; background: linear-gradient(#eef2fb, #c9d6ef); border-radius: 12px 0 0 12px; border-right: 1px solid #8ca9c4; border-left: 1px solid #8ca9c4; }
.fdot { width: 5px; height: 5px; border-radius: 50%; background: #a8b4c8; }
.fbtn em { font: italic bold 11px "Liberation Serif", serif; color: #555; } .fbtn small { font-size: 8px; }
.finput { flex: 1; }
.fexp { width: 15px; background: #d8e4f6; border: 1px solid #8ca9c4; display: flex; align-items: center; justify-content: center; }

/* workspace */
.work { flex: 1; min-height: 0; display: flex; margin-top: 3px; border-top: 1px solid #8ca9c4; }
.rec { width: 228px; flex: none; display: flex; flex-direction: column; background: #dcf0fb; border-right: 1px solid #9bb6d8; padding: 2px 0 0 1px; font-size: 10px; color: #3e5f8a; }
.rec h2 { margin: 0; height: 21px; padding-left: 3px; background: #b3c8ec; font: 13.200px/21px "Noto Sans", sans-serif; color: #3a5f99; }
.rec-intro { margin: 6px 0 0 6px; font-size: 10.300px; line-height: 12.500px; white-space: nowrap; }
.rec h3 { margin: 14px 5px 0; font-size: 10.500px; line-height: 14px; color: #2a5a9a; border-bottom: 1px solid #9bb6d8; }
.rec-list { margin: 4px 9px 0 15px; height: 596px; background: #fffff7; border: 2px solid #8f9bb0; display: flex; color: #333; }
.rec-items { flex: 1; min-width: 0; }
.rec-item { height: 65px; display: flex; gap: 8px; padding: 4px 0 0 9px; line-height: 14px; font-size: 10px; white-space: nowrap; overflow: hidden; }
.rec-item b { color: #111; }
.rec-hr { margin: -2px 5px 0 5px; border: 0; border-top: 1.500px solid #333; }
.rec-sc { width: 15px; border-left: 1px solid #ccd; background: #f1f5f5; display: flex; flex-direction: column; justify-content: space-between; text-align: center; font-size: 11px; line-height: 16px; color: #778; }
.rec-foot { flex: 1; display: flex; flex-direction: column; justify-content: flex-end; padding: 0 9px 10px 8px; }
.rec-link { display: flex; align-items: center; gap: 5px; font-size: 9.700px; color: #3a3ad0; margin-bottom: 8px; }
.rec-close { display: flex; justify-content: flex-end; }
.rec-close span { width: 39px; height: 20px; background: #dfe3d8; border: 1px solid #a9a9a0; text-align: center; line-height: 18px; color: #222; }
.sheetwrap { flex: 1; min-width: 0; display: flex; flex-direction: column; }
.sheetmain { flex: 1; min-height: 0; display: flex; }
.sheet { flex: 1; min-width: 0; display: flex; flex-direction: column; background: #fffff7; font: 12.800px "Lato", sans-serif; color: #1a1a1a;
  --g: linear-gradient(#e2e2f0, #e2e2f0);
  background-image: var(--g), var(--g), var(--g), var(--g), var(--g), var(--g), var(--g), var(--g), var(--g), var(--g), var(--g), var(--g), var(--g), var(--g), var(--g), var(--g), var(--g), var(--g), var(--g);
  background-size: 1px 100%; background-repeat: no-repeat;
  background-position: 83px 0, 363px 0, 558px 0, 670px 0, 711px 0, 752px 0, 812px 0, 872px 0, 932px 0, 992px 0, 1052px 0, 1112px 0, 1172px 0, 1232px 0, 1292px 0, 1352px 0, 1412px 0, 1472px 0, 1532px 0; }
.r { display: grid; grid-template-columns: 24px 60px 280px 195px 112px 41px 41px 60px repeat(12, 60px) 1fr; grid-auto-rows: minmax(0, 1fr); min-height: 0; background: linear-gradient(#e2e2f0, #e2e2f0) 0 100% / 100% 1px no-repeat; }
.hdr { height: 18px; flex: none; background: none; }
.corner { background: linear-gradient(135deg, #cfdcf4 52%, #a9bcd8 52%, #a9bcd8 78%, #cfdcf4 78%); border-right: 1px solid #aebfd8; border-bottom: 1px solid #aebfd8; }
.ch { background: linear-gradient(#e8eaf6 0 50%, #dfe4f2 50%, #f5f7fc); border-right: 1px solid #c0cce0; border-bottom: 1px solid #b4c4da; text-align: center; line-height: 17px; color: #4d5a6c; }
.ch.sel { background: linear-gradient(#f9d98e 0 50%, #f7c56a 50%, #f4b858); border-bottom-color: #f09a30; color: #4a4a3a; }
.rows { flex: 1; min-height: 0; display: grid; align-content: start; grid-template-rows: 19px 19px 19px 19px 18px 19px 19px 19px 18px 19px 19px 18px 18px 18px 18px 18px 17px 18px 18px repeat(6, 19px 19px 18px) 19px 19px 19px 19px; position: relative; }
.rh { background: #dbe6f8; border-right: 1px solid #b4c4da; border-bottom: 1px solid #c8d4e6; display: flex; align-items: center; justify-content: center; font-size: 13px; line-height: 1.100; color: #485566; }
.rh.f { color: #2a2ad0; }
.rh.sel { background: linear-gradient(#f9d98e, #f6bf60); color: #3a3a2a; }
.cell { background: #fffff7; border-right: 1px solid #111; border-bottom: 1px solid #111; padding: 1px 1px 0 2px; white-space: nowrap; display: flex; align-items: center; line-height: 1.200; min-width: 0; }
.band { grid-column: 3 / 9; background: #bbdff5; }
.hd { font-weight: 900; justify-content: space-between; background: #dcd8e6; color: #111; font-size: 13px; padding-right: 2px; }
.hd-t { background: #dcdfd8; }
.hd-m span { margin-right: -6px; }
.dd { width: 14px; height: 14px; flex: none; background: #e2e6f2; border: 1px solid #c2cadb; position: relative; }
.dd::after { content: ""; position: absolute; left: 3px; top: 4px; border: 3px solid transparent; border-top: 4px solid #445; }
.filt { width: 14px; height: 14px; }
.bold { font-weight: 700; font-size: 12.300px; }
.num { justify-content: flex-end; padding-right: 3px; }
.ctr { justify-content: center; }
.blk { background: #000; border-color: #000; }
.open { border-bottom: 0; }
.tri { position: relative; }
.tri::before { content: ""; position: absolute; left: 0; top: 0; border: 3px solid transparent; border-top-color: #1f8a3c; border-left-color: #1f8a3c; }
.c-b { grid-column: 3; } .c-c { grid-column: 4; } .c-d { grid-column: 5; } .c-e { grid-column: 6; } .c-f { grid-column: 7; } .c-g { grid-column: 8; } .c-ef { grid-column: 6 / 8; } .c-dg { grid-column: 5 / 9; }
.active { border: 3px solid #111; position: relative; z-index: 2; margin: -1px 0 -1px -1px; }
.active i { position: absolute; right: -5px; bottom: -5px; width: 6px; height: 6px; background: #111; border: 1px solid #fff; }
.ants { position: absolute; left: 84px; top: 37px; width: 729px; height: 171px; border: 2px dashed #222; pointer-events: none; }
.ants-h { height: 19px; border-bottom: 2px dashed #333; }
.vscroll { width: 15px; flex: none; margin-right: 0; background: #8da7d4; display: flex; flex-direction: column; font-size: 9px; color: #2c4a78; text-align: center; }
.vs-split { height: 12px; background: linear-gradient(#eef2fb, #c5d4ec); border: 1px solid #7b98c0; }
.vs-up, .vs-down { height: 15px; line-height: 15px; }
.vs-thumb { height: 730px; background: linear-gradient(to right, #e6e8f8, #d0d8f0); border: 1px solid #6f8fbd; display: flex; align-items: center; justify-content: center; }
.vs-thumb i { width: 7px; height: 5px; border-top: 1px solid #8a98b4; border-bottom: 1px solid #8a98b4; }
.vs-down { margin-top: auto; }
.sheetfoot { height: 15px; flex: none; display: flex; align-items: stretch; background: #9db3d9; border-top: 1px solid #7b98c0; font-size: 10px; }
.tabnav { width: 61px; background: #dbe6f8; display: flex; justify-content: space-around; align-items: center; color: #2c4a78; font-size: 8px; }
.sheettab { width: 56px; margin-left: 1px; background: #e6edfb; border-radius: 0 0 8px 2px; text-align: center; font: bold 12px/14px "Noto Sans", sans-serif; color: #2c4a78; }
.newtab { width: 34px; display: flex; align-items: center; justify-content: center; background: #dde7f6; transform: skewX(-18deg); margin-left: 3px; }
.newtab svg { transform: skewX(18deg); }
.hsc { flex: 1; display: flex; align-items: stretch; margin-left: 782px; color: #2c4a78; font-size: 9px; background: #7f9cc8; }
.hs-split { width: 6px; background: #e8f0fa; border: 1px solid #7b98c0; }
.hs-ar { width: 15px; text-align: center; line-height: 14px; }
.hs-thumb { width: 514px; background: linear-gradient(#e4f0f0 0 50%, #e4e4f8 50%); border: 1px solid #5f6f8f; display: flex; align-items: center; justify-content: center; }
.hs-thumb i { width: 6px; height: 7px; border-left: 1px solid #8a98b4; border-right: 1px solid #8a98b4; }
.r-ar { margin-left: auto; }
.status { height: 20px; flex: none; margin-top: 1px; border-top: 1px solid #b4c8e8; border-bottom: 1px solid #8ca9c4; background: linear-gradient(#dfe9fb 0 24%, #c4d8fb 24% 70%, #dce8fc 70%); display: flex; font-size: 10.200px; color: #2c3f60; align-items: center; }
.st-text { padding-left: 6px; flex: 1; }
.st-right { width: 229px; height: 18px; background: #bccde8; display: flex; align-items: center; padding-left: 2px; gap: 1px; border-left: 1px solid #a9bfdf; }
.vw { width: 17px; height: 17px; padding: 1px; background: #d0dcf0; }
.vw.on { background: #fbd98e; }
.zoomval { margin: 0 8px; color: #2c3f60; font-size: 10px; }
.zbtn { width: 14px; height: 14px; border-radius: 50%; border: 1px solid #8097b8; background: #e8eef8; text-align: center; line-height: 11px; font-size: 12px; color: #2c3f60; font-weight: bold; }
.ztrack { flex: none; width: 96px; height: 1px; background: #556; position: relative; margin: 0 1px; }
.ztrack i { position: absolute; left: 44px; top: -6px; width: 7px; height: 13px; background: #e8eef8; border: 1px solid #7b8ba8; border-radius: 1px 1px 4px 4px; }

/* remote taskbar */
.rtask { height: 37px; flex: none; background: #5fcfee; border-bottom: 1px solid #2f6472; border-top: 1px solid #3f7a8c; display: flex; }
.rt-quick { width: 165px; display: flex; align-items: center; padding-left: 10px; border-right: 1px solid #2f6472; border-left: 1px solid #2f6472; }
.rt-win { width: 27px; height: 27px; margin-right: 22px; }
.rt-quick .i30 { margin-left: 26px; }
.rt-item { display: flex; align-items: center; justify-content: center; border-right: 1px solid #2f6472; }
.rt-folder { width: 50px; margin-right: 7px; }
.rt-light { width: 48px; margin-right: 10px; border-left: 1px solid #2f6472; background: #85dcf4; }
.rt-light .i40 { width: 34px; height: 34px; }
.rt-orb { width: 52px; margin-right: 6px; border-left: 1px solid #2f6472; }
.rt-any { width: 57px; margin-right: 2px; background: #e3b940; border-left: 1px solid #2f6472; }
.rt-any .i32 { width: 30px; height: 30px; }
.rt-tool { width: 56px; }
.rt-tray { margin-left: auto; display: flex; align-items: center; gap: 4px; padding-right: 9px; }
.rt-up { font-size: 8px; color: #123; margin-right: 6px; }
.rt-clock { display: flex; flex-direction: column; align-items: center; width: 70px; margin-left: 5px; font: 10px/15px "Noto Sans", sans-serif; color: #1c2a3a; }
.gap-bot { height: 15px; flex: none; background: #666; }

/* local taskbar */
.wtask { height: 61px; flex: none; background: #10232b; display: flex; color: #fff; }
.wt-start { width: 72px; display: flex; align-items: center; justify-content: center; }
.wt-win { width: 24px; height: 24px; }
.wt-tv { width: 77px; display: flex; align-items: center; justify-content: center; padding-right: 5px; }
.wt { width: 75px; display: flex; align-items: center; justify-content: center; position: relative; }
.wt::after { content: ""; position: absolute; left: 7px; right: 7px; bottom: 0; height: 3px; background: #76b9ed; }
.wt:nth-child(5)::after, .wt:nth-child(8)::after, .wt:nth-child(9)::after { display: none; }
.wt-active { background: #3d4a52; }
.wt-active::after { left: 0; right: 0; }
.dev { font: bold 9px "Liberation Sans", sans-serif; fill: #10232b; letter-spacing: 2px; }
.w-l { font: bold 26px "Liberation Serif", serif; fill: #2a5ab8; }
.wt-tray { flex: 1; display: flex; align-items: center; padding-left: 325px; }
.wt-tray .i20 { margin-right: 25px; }
.tr-plug { margin-right: 27px; }
.tr-wifi { margin-right: 21px; }
.wt-eng { font: 17px Roboto, sans-serif; margin-left: 23px; width: 32px; }
.wt-clock { width: 136px; display: flex; flex-direction: column; align-items: center; font: 18.400px/30px Roboto, sans-serif; color: #fff; }
.wt-notif { width: 40px; position: relative; margin-left: 7px; }
.notif-n { position: absolute; left: 13px; top: 11px; width: 24px; height: 24px; border-radius: 50%; background: #333; border: 1px solid #ccc; text-align: center; font: bold 16px/22px "Liberation Sans", sans-serif; }
```
